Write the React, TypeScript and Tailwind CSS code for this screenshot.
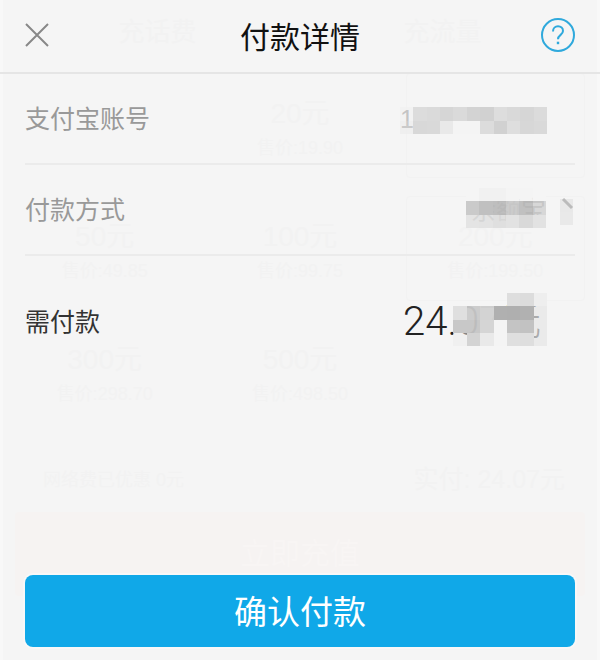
// 背面に透けて見えるチャージ画面の金額一覧
const plans = [
  { amount: "", price: "" },
  { amount: "20元", price: "售价:19.90" },
  { amount: "", price: "" },
  { amount: "50元", price: "售价:49.85" },
  { amount: "100元", price: "售价:99.75" },
  { amount: "200元", price: "售价:199.50" },
  { amount: "300元", price: "售价:298.70" },
  { amount: "500元", price: "售价:498.50" },
];

// モザイク1マス: [列, 行, 色, 不透明度]
type Cell = [number, number, string, number];

const accountCells: Cell[] = [
  [0, 0, "#efefef", 0.5], [1, 0, "#dcdcdc", 1], [2, 0, "#dadada", 1], [3, 0, "#d6d6d6", 1],
  [4, 0, "#dadada", 1], [5, 0, "#d3d3d3", 1], [6, 0, "#d1d1d1", 1], [7, 0, "#dddddd", 1],
  [8, 0, "#d9d9d9", 1], [9, 0, "#d6d6d6", 1], [10, 0, "#dbdbdb", 1],
  [0, 1, "#ebebeb", 0.6], [1, 1, "#d8d8d8", 1], [2, 1, "#d9d9d9", 1], [3, 1, "#e9e9e9", 1],
  [4, 1, "#f4f4f4", 1], [5, 1, "#f4f4f4", 1], [6, 1, "#dcdcdc", 1], [7, 1, "#d1d1d1", 1],
  [8, 1, "#dedede", 1], [9, 1, "#d7d7d7", 1], [10, 1, "#d9d9d9", 1],
];

const methodCells: Cell[] = [
  [0, 0, "#f5f5f5", 1], [1, 0, "#f1f1f1", 1], [2, 0, "#f1f1f1", 1], [3, 0, "#f4f4f4", 1], [4, 0, "#f4f4f4", 0.9], [5, 0, "#f5f5f5", 1],
  [0, 1, "#cacaca", 1], [1, 1, "#c0c0c0", 1], [2, 1, "#bbbbbb", 0.95], [3, 1, "#c8c8c8", 0.95], [4, 1, "#bababa", 0.9], [5, 1, "#d0d0d0", 0.8],
  [0, 2, "#e1e1e1", 0.85], [1, 2, "#dfdfdf", 0.85], [2, 2, "#dddddd", 0.9], [3, 2, "#e2e2e2", 1], [4, 2, "#d9d9d9", 1], [5, 2, "#e2e2e2", 1],
];

const amountCells: Cell[] = [
  [5, 0, "#dedede", 1], [6, 0, "#dcdcdc", 1], [7, 0, "#eeeeee", 1],
  [1, 1, "#dfdfdf", 1], [2, 1, "#c9c9c9", 0.95], [3, 1, "#d2d2d2", 0.98], [4, 1, "#b0b0b0", 1], [5, 1, "#afafaf", 1], [6, 1, "#b1b1b1", 1], [7, 1, "#e6e6e6", 0.7],
  [1, 2, "#c8c8c8", 1], [2, 2, "#c5c5c5", 0.95], [3, 2, "#d5d5d5", 1], [4, 2, "#f4f4f4", 1], [5, 2, "#c4c4c4", 1], [6, 2, "#c2c2c2", 1], [7, 2, "#e6e6e6", 0.7],
  [1, 3, "#ececec", 0.5], [2, 3, "#d3d3d3", 1], [3, 3, "#e9e9e9", 1], [4, 3, "#f4f4f4", 1], [5, 3, "#dfdfdf", 1], [6, 3, "#dedede", 1], [7, 3, "#e5e5e5", 0.7],
];

interface MosaicProps {
  cells: Cell[];
  cols: number;
  rows: number;
  className: string;
}

function Mosaic({ cells, cols, rows, className }: MosaicProps) {
  return (
    <svg
      aria-hidden="true"
      viewBox={`0 0 ${cols} ${rows}`}
      preserveAspectRatio="none"
      shapeRendering="crispEdges"
      className={`absolute ${className}`}
    >
      {cells.map(([x, y, fill, opacity]) => (
        <rect key={`${x}-${y}`} x={x} y={y} width={1} height={1} fill={fill} opacity={opacity} />
      ))}
    </svg>
  );
}

// シートの下にうっすら残るチャージ画面
function RechargePage() {
  return (
    <div
      aria-hidden="true"
      className="pointer-events-none absolute inset-0 flex select-none flex-col border-x-3 border-[#f8f8f8] px-3 text-[#f2f2f2]"
    >
      <div className="grid h-[73px] shrink-0 grid-cols-2 text-center text-[26px] leading-[64px]">
        <span>充话费</span>
        <span>充流量</span>
      </div>
      <div className="grid grid-cols-3 gap-x-4 gap-y-[18px] text-center">
        {plans.map((plan, i) => (
          <div
            key={i}
            className={`h-[105px] rounded border pt-5 ${i === 2 || i === 5 ? "border-[#f2f2f2]" : "border-transparent"}`}
          >
            <p className="h-10 text-[28px] leading-10">{plan.amount}</p>
            <p className="text-[18px] leading-7">{plan.price}</p>
          </div>
        ))}
      </div>
      <div className="mt-7 flex h-14 items-center justify-between px-5">
        <span className="pl-2 text-[18px]">网络费已优惠 0元</span>
        <span className="text-[25px]">实付: 24.07元</span>
      </div>
      <div className="mt-1 h-[84px] rounded bg-[#f6f3f2] text-center text-[30px] leading-[84px] text-[#f8f5f4]">
        立即充值
      </div>
    </div>
  );
}

export default function App() {
  return (
    <main className="relative min-h-screen overflow-hidden bg-[#f5f5f5] font-['Liberation_Sans','Noto_Sans_CJK_SC',sans-serif]">
      <RechargePage />

      <div className="relative flex min-h-screen flex-col">
        <header className="flex h-[74px] items-center justify-between border-b-2 border-[#e5e5e5] px-6">
          <button type="button" aria-label="关闭" className="flex size-9 items-center text-[#888]">
            <svg viewBox="0 0 26 26" className="size-[26px]" fill="none" stroke="currentColor" strokeWidth="2">
              <path d="M2 1L24 23M24 1L2 23" />
            </svg>
          </button>
          <h1 className="pt-1 text-[30px] leading-10 text-[#111]">付款详情</h1>
          <button type="button" aria-label="帮助" className="text-[#2fa9dc]">
            <svg viewBox="0 0 36 36" className="size-9" fill="none" stroke="currentColor" strokeWidth="2">
              <circle cx="18" cy="17" r="16" />
              <path d="M13 13.5C13 10.2 15.2 8.3 18 8.3S23 10.2 23 13C23 17 18 16.8 18 21.3" />
              <path d="M18 23.7V26.2" strokeWidth="2.4" />
            </svg>
          </button>
        </header>

        <dl className="px-[25px]">
          <div className="flex h-[91px] items-center justify-between border-b-2 border-[#ebebeb]">
            <dt className="text-[25px] leading-9 text-[#999]">支付宝账号</dt>
            <dd className="relative mr-7 w-[147px] text-[25px] leading-9 text-[#999]">
              1
              <Mosaic cells={accountCells} cols={11} rows={2} className="left-0 top-[6px] h-[27px] w-[147px]" />
            </dd>
          </div>
          <div className="flex h-[91px] items-center border-b-2 border-[#ebebeb]">
            <dt className="grow text-[25px] leading-9 text-[#999]">付款方式</dt>
            <dd className="flex items-center">
              <span className="relative w-20 text-right text-[25px] leading-9 text-[#999]">
                余额宝
                <Mosaic cells={methodCells} cols={6} rows={3} className="-top-1 left-0 h-10 w-20" />
              </span>
              <svg aria-hidden="true" viewBox="0 0 14 30" className="ml-[14px] mr-px h-[30px] w-[14px]" fill="none">
                <rect x="0" y="4" width="13" height="13" fill="#e8e8e8" />
                <rect x="0" y="17" width="13" height="13" fill="#e9e9e9" />
                <path d="M3 4L12 13" stroke="#bbb" strokeWidth="3" />
              </svg>
            </dd>
          </div>
          <div className="flex h-[132px] items-center justify-between">
            <dt className="text-[25px] leading-9 text-[#333]">需付款</dt>
            <dd className="relative mr-7 w-36 font-['Roboto','Noto_Sans_CJK_SC',sans-serif] text-[40px] font-light leading-[52px] text-[#222]">
              24.07元
              <Mosaic cells={amountCells} cols={8} rows={4} className="-top-[3px] right-0 h-[53px] w-[107px]" />
            </dd>
          </div>
        </dl>

        <div className="mt-auto px-[25px] pb-[13px]">
          <button
            type="button"
            className="h-[72px] w-full rounded-lg bg-[#10a8e8] pt-1 text-[33px] leading-[68px] text-white ring-2 ring-[#f8f8f8]"
          >
            确认付款
          </button>
        </div>
      </div>
    </main>
  );
}
